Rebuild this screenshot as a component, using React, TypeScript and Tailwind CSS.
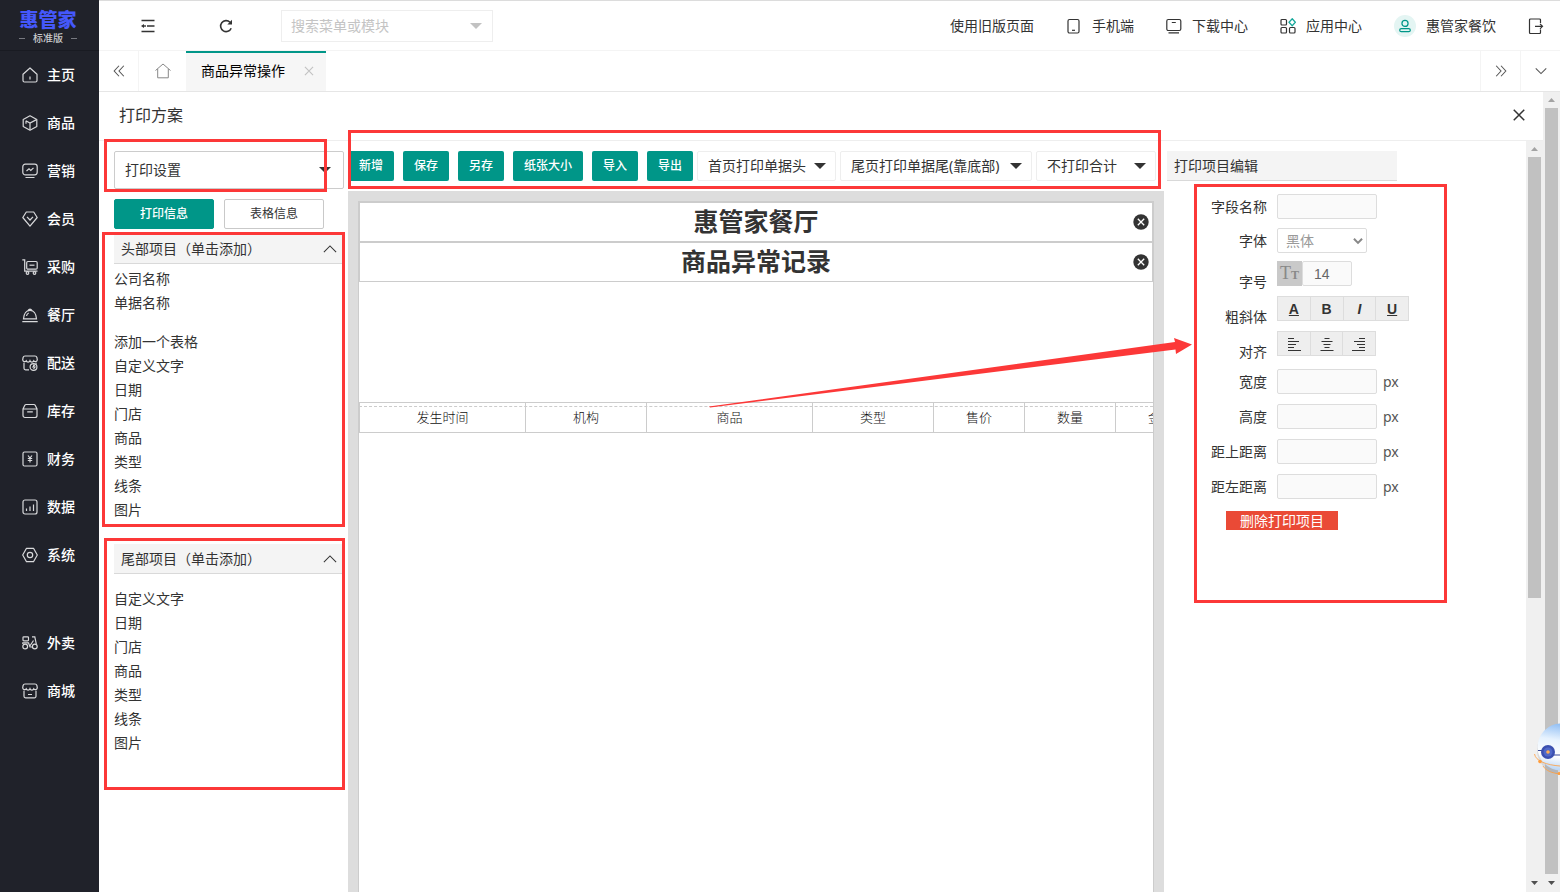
import { useState, type ReactNode } from "react";
import clsx from "clsx";

type MenuItem = { label: string; icon: ReactNode };

const mainMenu: MenuItem[] = [
  {
    label: "主页",
    icon: (
      <>
        <path d="M1 7.200 8 1l7 6.200v6.300a1.500 1.500 0 0 1-1.500 1.500h-11A1.500 1.500 0 0 1 1 13.500z" strokeLinejoin="round" />
        <path d="M8 9.500v3" />
      </>
    ),
  },
  {
    label: "商品",
    icon: (
      <>
        <path d="m8 .8 6.800 3.700v7L8 15.200l-6.800-3.700v-7z" strokeLinejoin="round" />
        <path d="m3.800 5.800 4.200 2.200 6.500-3.400M8 8v7M4 5.800v3" />
      </>
    ),
  },
  {
    label: "营销",
    icon: (
      <>
        <rect x="0.800" y="1.200" width="14.400" height="10.600" rx="2.500" />
        <path d="m4.500 8 2.500-2.200 1.800 1.700 2.700-2.700M3.500 14.500h9" />
      </>
    ),
  },
  {
    label: "会员",
    icon: (
      <>
        <path d="M4.300 1h7.400l3.500 5.500L8 15.200.8 6.500z" strokeLinejoin="round" />
        <path d="m5 5.800 3 3.200 3-3.200" />
      </>
    ),
  },
  {
    label: "采购",
    icon: (
      <>
        <path d="M.3.8h2.400v11.400h12.800" />
        <rect x="4.700" y="2.500" width="10.500" height="7.700" rx="1.200" />
        <path d="M7.500 6.200h5" />
        <circle cx="5.500" cy="14" r="1.300" />
        <circle cx="12.500" cy="14" r="1.300" />
      </>
    ),
  },
  {
    label: "餐厅",
    icon: (
      <>
        <path d="M1.500 11.800C1.800 6.500 4.500 3.300 8 3.300s6.200 3.200 6.500 8.500zM.3 14.600h15.400M6.300 3.300a1.800 1.800 0 0 1 3.400 0" />
        <path d="M4.500 9A4 4 0 0 1 6.700 6" />
      </>
    ),
  },
  {
    label: "配送",
    icon: (
      <>
        <path d="M7 14.800H3.500A1.500 1.500 0 0 1 2 13.300V7.800M14.200 7.800v1M3 1h10q1.500 0 1.900 1.500l.4 2.300a1.900 1.900 0 0 1-3.500 1 2 2 0 0 1-3.800 0 2 2 0 0 1-3.800 0 1.900 1.900 0 0 1-3.500-1l.4-2.300Q1.500 1 3 1z" />
        <circle cx="11.500" cy="12" r="3.400" />
        <path d="M11 10.200h1.500L11 12h2l-1.500 2" />
      </>
    ),
  },
  {
    label: "库存",
    icon: (
      <path d="M1 6 2.800 2.300a1.500 1.500 0 0 1 1.300-.8h7.800a1.500 1.500 0 0 1 1.300.8L15 6v6.500a2 2 0 0 1-2 2H3a2 2 0 0 1-2-2zM1 6h14M5.200 8.800h5.600" />
    ),
  },
  {
    label: "财务",
    icon: (
      <>
        <rect x="1" y="1" width="14" height="14" rx="1.500" />
        <path d="m6 4.500 2 2.500 2-2.500M8 7v4.500M5.800 7.500h4.400M5.800 9.500h4.400" />
      </>
    ),
  },
  {
    label: "数据",
    icon: (
      <>
        <rect x="1" y="1" width="14" height="14" rx="2" />
        <path d="M4.500 9.500v2.500M8 7.500v4.500M11.500 5.500v6.500" />
      </>
    ),
  },
  {
    label: "系统",
    icon: (
      <>
        <path d="M4.500 1.300h7L15.300 8l-3.800 6.700h-7L.7 8z" strokeLinejoin="round" />
        <circle cx="8" cy="8" r="2.700" />
      </>
    ),
  },
];

const extraMenu: MenuItem[] = [
  {
    label: "外卖",
    icon: (
      <>
        <rect x="1" y="1.800" width="5.500" height="4" rx="0.800" />
        <circle cx="3.200" cy="11.500" r="2.400" />
        <circle cx="12.800" cy="11.500" r="2.400" />
        <path d="M.8 9V7.800h5.700L8 12h2.500M10 1.800h2.800l1.500 7.200M7.500 11.500l4-6" />
      </>
    ),
  },
  {
    label: "商城",
    icon: (
      <path d="M2 7.800v5.500a1.500 1.500 0 0 0 1.500 1.500h9a1.500 1.500 0 0 0 1.500-1.500V7.800M3 1h10q1.500 0 1.900 1.500l.4 2.300a1.900 1.900 0 0 1-3.500 1 2 2 0 0 1-3.800 0 2 2 0 0 1-3.800 0 1.900 1.900 0 0 1-3.500-1l.4-2.300Q1.500 1 3 1zM6 11.500h4" />
    ),
  },
];

const headGroups = [
  ["公司名称", "单据名称"],
  ["添加一个表格", "自定义文字", "日期", "门店", "商品", "类型", "线条", "图片"],
];
const footItems = ["自定义文字", "日期", "门店", "商品", "类型", "线条", "图片"];

const actions = ["新增", "保存", "另存", "纸张大小", "导入", "导出"];

const columns = [
  { title: "发生时间", width: 166 },
  { title: "机构", width: 121 },
  { title: "商品", width: 166 },
  { title: "类型", width: 121 },
  { title: "售价", width: 91 },
  { title: "数量", width: 91 },
  { title: "金额", width: 91 },
];

const sizeFields = ["宽度", "高度", "距上距离", "距左距离"];

function Icon({ children, className, size = 16 }: { children: ReactNode; className?: string; size?: number }) {
  return (
    <svg
      width={size}
      height={size}
      viewBox="0 0 16 16"
      fill="none"
      stroke="currentColor"
      strokeWidth="1.2"
      className={clsx("shrink-0", className)}
      aria-hidden="true"
    >
      {children}
    </svg>
  );
}

function Caret({ className }: { className?: string }) {
  return (
    <svg width="12" height="6" viewBox="0 0 12 6" className={clsx("shrink-0", className)} aria-hidden="true">
      <path d="M0 0h12L6 6z" fill="currentColor" />
    </svg>
  );
}

// Red annotation frame drawn over a section
function Mark({ className }: { className: string }) {
  return <div className={clsx("pointer-events-none absolute z-10 border-[3px] border-[#fc3838]", className)} />;
}

function Picker({ label, value, className, caret }: { label: string; value: string; className: string; caret: string }) {
  return (
    <div className={clsx("relative flex items-center rounded-xs border bg-white", className)}>
      <select aria-label={label} className="h-full w-full appearance-none pl-[10px] outline-none">
        <option>{value}</option>
      </select>
      <Caret className={clsx("pointer-events-none absolute", caret)} />
    </div>
  );
}

function ScrollBar({ thumb }: { thumb: string }) {
  return (
    <div className="flex w-[17px] shrink-0 flex-col items-center bg-[#f0f0f0]">
      <div className="flex h-4 items-center">
        <svg width="7" height="4" viewBox="0 0 7 4"><path d="M0 4h7L3.500 0z" fill="#a3a3a3" /></svg>
      </div>
      <div className="min-h-0 w-[13px] flex-1">
        <div className={clsx("w-full bg-[#c1c1c1]", thumb)} />
      </div>
      <div className="flex h-[18px] items-center">
        <svg width="7" height="4" viewBox="0 0 7 4"><path d="M0 0h7L3.500 4z" fill="#505050" /></svg>
      </div>
    </div>
  );
}

function Sidebar() {
  const renderItem = (item: MenuItem) => (
    <li key={item.label}>
      <a href="#" className="flex h-12 items-center gap-[9px] pl-[22px]">
        <Icon className="text-[#d8d9db]">{item.icon}</Icon>
        {item.label}
      </a>
    </li>
  );
  return (
    <nav className="w-[99px] shrink-0 bg-[#20222a] text-sm font-medium text-white">
      <div className="flex h-[51px] flex-col items-center border-b border-[#191b22] pr-[3px] pt-[10px]">
        <div className="text-[19px] leading-5 font-black text-[#4558fb]">惠管家</div>
        <div className="flex items-center gap-2 text-[10px] leading-4 text-[#c9cacc]">
          <i className="h-px w-[6px] bg-[#777980]" />
          标准版
          <i className="h-px w-[6px] bg-[#777980]" />
        </div>
      </div>
      <ul>{mainMenu.map(renderItem)}</ul>
      <ul className="mt-10">{extraMenu.map(renderItem)}</ul>
    </nav>
  );
}

function TopBar() {
  return (
    <header className="flex h-[51px] items-center border-t border-b border-t-[#dcdcdc] border-b-[#f4f4f4] pr-4 pl-[41px] text-sm">
      <button type="button" aria-label="收起菜单">
        <Icon>
          <path d="M1.500 2.500h13M7 8h7.500M1.500 13.500h13" strokeWidth="1.400" />
          <path d="M1 8l3-2v4z" fill="currentColor" stroke="none" />
          <path d="M3 8h3" strokeWidth="1.400" />
        </Icon>
      </button>
      <button type="button" aria-label="刷新" className="ml-[62px]">
        <Icon>
          <path d="M13.200 10.200A5.500 5.500 0 1 1 12 4.200" strokeWidth="1.600" />
          <path d="M14 1.800v4.700H9.300z" fill="currentColor" stroke="none" />
        </Icon>
      </button>
      <div className="ml-[47px] flex h-8 w-[212px] items-center border border-[#eee] pr-[10px] pl-[9px]">
        <input
          type="text"
          aria-label="搜索"
          placeholder="搜索菜单或模块"
          className="min-w-0 flex-1 outline-none placeholder:text-[#c4c4c4]"
        />
        <Caret className="text-[#c2c2c2]" />
      </div>
      <div className="ml-auto flex items-center gap-8">
        <a href="#">使用旧版页面</a>
        <a href="#" className="flex items-center gap-[10px]">
          <Icon>
            <rect x="2" y="1.500" width="11" height="13.500" rx="1.500" />
            <path d="M6 12.300h3" />
          </Icon>
          手机端
        </a>
        <a href="#" className="flex items-center gap-[10px]">
          <Icon>
            <rect x="0.800" y="1.500" width="14" height="11" rx="1.500" />
            <path d="M5.800 4.500h4M2.500 14.800h10.500" />
          </Icon>
          下载中心
        </a>
        <a href="#" className="flex items-center gap-[10px]">
          <Icon>
            <rect x="1" y="1.500" width="5.500" height="5.500" rx="1" />
            <rect x="1" y="9.500" width="5.500" height="5.500" rx="1" />
            <rect x="9.500" y="9.500" width="5.500" height="5.500" rx="1" />
            <path d="m12.200.8 3.200 3.500-3.200 3.500L9 4.300z" stroke="#16a89b" strokeWidth="1.300" />
          </Icon>
          应用中心
        </a>
        <a href="#" className="flex items-center gap-[10px]">
          <span className="flex size-[22px] items-center justify-center rounded-full bg-[#e4f5f3] text-[#009688]">
            <Icon size={14}>
              <circle cx="8" cy="5" r="3.500" strokeWidth="1.400" />
              <rect x="2" y="11" width="12" height="3.500" rx="1.700" strokeWidth="1.400" />
            </Icon>
          </span>
          惠管家餐饮
        </a>
        <button type="button" aria-label="退出">
          <Icon>
            <path d="M12.500 5V2a1 1 0 0 0-1-1h-9a1 1 0 0 0-1 1v12.500a1 1 0 0 0 1 1h9a1 1 0 0 0 1-1v-3M7 8.300h7.500M12 5.800l2.500 2.500-2.500 2.500" />
          </Icon>
        </button>
      </div>
    </header>
  );
}

function TabBar() {
  return (
    <div className="flex h-[41px] border-b border-[#e6e6e6] text-sm text-[#555]">
      <button type="button" aria-label="向左" className="flex w-10 items-center justify-center border-r border-[#f4f4f4]">
        <Icon size={14}><path d="M8 2 2.500 8 8 14M13.500 2 8 8l5.500 6" /></Icon>
      </button>
      <button type="button" aria-label="首页" className="flex w-[47px] items-center justify-center text-[#888]">
        <Icon><path d="M.5 7.500 8 1l7.500 6.500M2.700 6v8.800h10.600V6" strokeWidth="1" /></Icon>
      </button>
      <div className="flex items-center border-t-2 border-[#009688] bg-[#f6f6f6] pr-3 pb-[2px] pl-[15px]">
        <a href="#" className="text-black">商品异常操作</a>
        <button type="button" aria-label="关闭标签" className="ml-[19px] text-[#c2c2c2]">
          <Icon size={10}><path d="m1.500 1.500 13 13M14.500 1.500l-13 13" strokeWidth="1.800" /></Icon>
        </button>
      </div>
      <button type="button" aria-label="向右" className="ml-auto flex w-10 items-center justify-center border-l border-[#f4f4f4]">
        <Icon size={14}><path d="m2.500 2 5.500 6-5.500 6M8 2l5.500 6L8 14" /></Icon>
      </button>
      <button type="button" aria-label="更多" className="flex w-10 items-center justify-center border-l border-[#f4f4f4]">
        <Icon size={14}><path d="m2 5 6 6 6-6" /></Icon>
      </button>
    </div>
  );
}

function GroupHeader({ title }: { title: string }) {
  return (
    <button type="button" className="flex h-[30px] w-full items-center justify-between border-b border-[#d9d9d9] bg-[#f4f4f4] px-[7px]">
      {title}
      <Icon size={14}><path d="M1 11.500 8 4.500l7 7" /></Icon>
    </button>
  );
}

function ItemList({ items }: { items: string[] }) {
  return (
    <ul className="leading-6">
      {items.map((t) => (
        <li key={t}>
          <button type="button" className="block">{t}</button>
        </li>
      ))}
    </ul>
  );
}

function LeftPanel() {
  const [tab, setTab] = useState("打印信息");
  return (
    <aside className="w-[249px] shrink-0 pt-[10px] pr-1 pl-[15px]">
      <div className="relative">
        <Picker label="打印设置" value="打印设置" className="h-[38px] border-[#ccc]" caret="right-[12px]" />
        <Mark className="-top-3 right-[17px] -bottom-[3px] -left-[10px]" />
      </div>
      <div className="mt-[10px] flex gap-[10px] text-xs">
        {["打印信息", "表格信息"].map((t) => (
          <button
            key={t}
            type="button"
            onClick={() => setTab(t)}
            className={clsx(
              "h-[30px] w-[100px] rounded-xs border",
              tab === t ? "border-[#009688] bg-[#009688] font-medium text-white" : "border-[#c9c9c9] bg-white",
            )}
          >
            {t}
          </button>
        ))}
      </div>
      <section className="relative mt-[5px]">
        <GroupHeader title="头部项目（单击添加）" />
        <div className="mt-[3px] flex flex-col gap-[15px]">
          {headGroups.map((g) => (
            <ItemList key={g[0]} items={g} />
          ))}
        </div>
        <Mark className="-top-[2px] -right-px -bottom-[5px] -left-3" />
      </section>
      <section className="relative mt-[22px] pb-[30px]">
        <GroupHeader title="尾部项目（单击添加）" />
        <div className="mt-[13px]">
          <ItemList items={footItems} />
        </div>
        <Mark className="-top-[6px] -right-px -bottom-[5px] -left-[10px]" />
      </section>
    </aside>
  );
}

function PaperTitle({ text }: { text: string }) {
  return (
    <div className="relative flex h-10 items-center justify-center border border-[#ccc] text-[25px] font-bold">
      {text}
      <button type="button" aria-label={`删除${text}`} className="absolute right-[3px]">
        <Icon>
          <circle cx="8" cy="8" r="7.700" fill="#333" stroke="none" />
          <path d="m4.800 4.800 6.400 6.400M11.200 4.800l-6.400 6.400" stroke="#fff" strokeWidth="1.300" />
        </Icon>
      </button>
    </div>
  );
}

function Designer() {
  return (
    <div className="relative flex min-w-0 flex-1 flex-col pt-[10px]">
      <div className="flex h-[30px] gap-1">
        <div className="flex gap-[9px]">
          {actions.map((a) => (
            <button key={a} type="button" className="rounded-xs bg-[#009688] px-[11px] text-xs font-medium whitespace-nowrap text-white">
              {a}
            </button>
          ))}
        </div>
        <div className="flex gap-1">
          <Picker label="单据头" value="首页打印单据头" className="w-[139px] border-[#eee]" caret="right-[9px]" />
          <Picker label="单据尾" value="尾页打印单据尾(靠底部)" className="w-[192px] border-[#eee]" caret="right-[9px]" />
          <Picker label="合计" value="不打印合计" className="w-[120px] border-[#eee]" caret="right-[9px]" />
        </div>
      </div>
      <Mark className="-top-[11px] right-[3px] left-0 h-[59px]" />
      <div className="mt-[10px] flex-1 bg-[#ddd] px-[10px] pt-[10px]">
        <div className="h-full overflow-hidden border border-b-0 border-[#ccc] bg-white">
          <PaperTitle text="惠管家餐厅" />
          <PaperTitle text="商品异常记录" />
          <div className="relative mt-[120px]">
            <table className="w-[847px] table-fixed border-collapse text-[13px] text-[#111]">
              <colgroup>
                {columns.map((c) => (
                  <col key={c.title} style={{ width: c.width }} />
                ))}
              </colgroup>
              <thead>
                <tr className="h-[30px]">
                  {columns.map((c) => (
                    <th key={c.title} scope="col" className="border border-[#ccc] p-0 font-light">
                      {c.title}
                    </th>
                  ))}
                </tr>
              </thead>
            </table>
            <div className="absolute inset-x-0 top-1 border-t border-dashed border-[#ccc]" />
          </div>
        </div>
      </div>
      <svg width="484" height="70" viewBox="0 0 484 70" className="pointer-events-none absolute top-[197px] left-[361px] z-10" aria-hidden="true">
        <path d="M0 68.500 466 4l-1-4 18 6.500L467 16l-.5-4.500L1 69.500z" fill="#fc3838" />
      </svg>
    </div>
  );
}

const box = "h-[25px] rounded-xs border border-[#ddd] bg-[#fafafa] outline-none";

function Field({ label, id, low, children }: { label: string; id: string; low?: boolean; children: ReactNode }) {
  return (
    <div className="flex items-start gap-[10px]">
      <label htmlFor={id} className={clsx("w-[100px] text-right leading-[25px]", low && "pt-2")}>
        {label}
      </label>
      {children}
    </div>
  );
}

const toolCell = "flex flex-1 items-center justify-center border-r border-[#ddd] last:border-r-0";

function PropertyPanel() {
  return (
    <aside className="w-[362px] shrink-0 pt-[10px] pl-[3px]">
      <h3 className="h-[30px] w-[230px] border-b border-[#d9d9d9] bg-[#f4f4f4] px-[7px] leading-[30px]">打印项目编辑</h3>
      <form className="relative mt-[3px] pt-[10px]">
        <div className="flex flex-col gap-[9px]">
          <Field label="字段名称" id="name">
            <input id="name" type="text" className={clsx(box, "w-[100px]")} />
          </Field>
          <Field label="字体" id="font">
            <div className="relative flex items-center">
              <select id="font" className="h-[25px] w-[90px] appearance-none rounded-xs border border-[#ddd] bg-white pl-2 text-[#999]">
                <option>黑体</option>
              </select>
              <Icon size={10} className="pointer-events-none absolute right-1 text-[#888]">
                <path d="m1.500 4.500 6.500 6.500 6.500-6.500" strokeWidth="3.200" />
              </Icon>
            </div>
          </Field>
        </div>
        <div className="mt-2 flex flex-col gap-[2px]">
          <Field label="字号" id="size" low>
            <div className="flex">
              <span className="flex h-[25px] w-[25px] items-baseline justify-center bg-[#c9c9c9] font-['Liberation_Serif',serif] text-[#888]">
                <span className="text-lg leading-[25px]">T</span>
                <span className="text-xs font-bold">T</span>
              </span>
              <input id="size" type="text" defaultValue="14" className={clsx(box, "w-[50px] pl-[11px] font-['Liberation_Sans',sans-serif] text-[#666]")} />
            </div>
          </Field>
          <Field label="粗斜体" id="style" low>
            <div id="style" role="group" className="flex h-[25px] w-[132px] border border-[#ddd] bg-[#eee] font-['Liberation_Sans',sans-serif] font-bold">
              <button type="button" className={clsx(toolCell, "underline")}>A</button>
              <button type="button" className={toolCell}>B</button>
              <button type="button" className={clsx(toolCell, "italic")}>I</button>
              <button type="button" className={clsx(toolCell, "underline")}>U</button>
            </div>
          </Field>
          <Field label="对齐" id="align" low>
            <div id="align" role="group" className="flex h-[25px] w-[99px] border border-[#ddd] bg-[#eee]">
              <button type="button" aria-label="左对齐" className={toolCell}>
                <Icon><path d="M2 2.500h6M2 5.500h11M2 8.500h8M2 11.500h6M2 14.500h13" /></Icon>
              </button>
              <button type="button" aria-label="居中" className={toolCell}>
                <Icon><path d="M5.500 2.500h5M2.500 5.500h11M4.500 8.500h7M5.500 11.500h5M1.500 14.500h13" /></Icon>
              </button>
              <button type="button" aria-label="右对齐" className={toolCell}>
                <Icon><path d="M8 2.500h6M3 5.500h11M6 8.500h8M8 11.500h6M1 14.500h13" /></Icon>
              </button>
            </div>
          </Field>
        </div>
        <div className="mt-[5px] flex flex-col gap-[10px]">
          {sizeFields.map((f) => (
            <Field key={f} label={f} id={f}>
              <div className="flex items-center gap-[6px]">
                <input id={f} type="text" className={clsx(box, "w-[100px]")} />
                <span className="leading-[25px] text-[#555]">px</span>
              </div>
            </Field>
          ))}
        </div>
        <button type="button" className="mt-3 ml-[59px] block h-[19px] w-[112px] bg-[#ea4a36] leading-[19px] text-white">
          删除打印项目
        </button>
        <Mark className="top-0 left-[27px] h-[419px] w-[253px]" />
      </form>
    </aside>
  );
}

function Assistant() {
  return (
    <svg width="26" height="58" viewBox="0 0 26 58" className="absolute top-[718px] right-0 z-20" aria-hidden="true">
      <defs>
        <linearGradient id="ball" x1="0.500" y1="0" x2="0.350" y2="1">
          <stop offset="0" stopColor="#8fbdf3" />
          <stop offset="0.350" stopColor="#e6f2fe" />
          <stop offset="0.700" stopColor="#fff" />
          <stop offset="1" stopColor="#b5d3f5" />
        </linearGradient>
      </defs>
      <circle cx="27" cy="32" r="24" fill="#8a93a5" opacity="0.250" />
      <circle cx="27" cy="29" r="23.500" fill="url(#ball)" />
      <path d="M4 32.500h5M20 37h6" stroke="#3a4a9a" />
      <circle cx="14" cy="34" r="7" fill="#3b50b0" />
      <circle cx="14" cy="34" r="4.500" fill="#5069c9" />
      <circle cx="14" cy="34" r="1.800" fill="#ffae55" />
      <path d="M.5 36c1 7 12 11 25.500 12M9 48c3 5 9 7 17 8" fill="none" stroke="#ff9d3c" strokeWidth="0.800" />
      <circle cx="6" cy="43.500" r="1.800" fill="#ff9d3c" />
      <circle cx="25" cy="55.500" r="1.500" fill="#ff9d3c" />
    </svg>
  );
}

export default function App() {
  return (
    <div className="relative flex h-screen w-full overflow-hidden bg-white font-['Noto_Sans','Noto_Sans_CJK_SC',sans-serif] text-sm text-[#333]">
      <Sidebar />
      <div className="flex min-w-0 flex-1 flex-col">
        <TopBar />
        <TabBar />
        <main className="flex min-h-0 flex-1">
          <div className="flex min-w-0 flex-1 flex-col">
            <div className="flex h-[49px] items-center justify-between border-b border-[#eee] pr-[17px] pb-[2px] pl-5">
              <h2 className="text-base">打印方案</h2>
              <button type="button" aria-label="关闭">
                <Icon size={14}><path d="m2 2 12 12M14 2 2 14" strokeWidth="1.700" /></Icon>
              </button>
            </div>
            <div className="flex min-h-0 flex-1">
              <LeftPanel />
              <Designer />
              <PropertyPanel />
              <ScrollBar thumb="h-[441px]" />
            </div>
          </div>
          <ScrollBar thumb="h-full" />
        </main>
      </div>
      <Assistant />
    </div>
  );
}
